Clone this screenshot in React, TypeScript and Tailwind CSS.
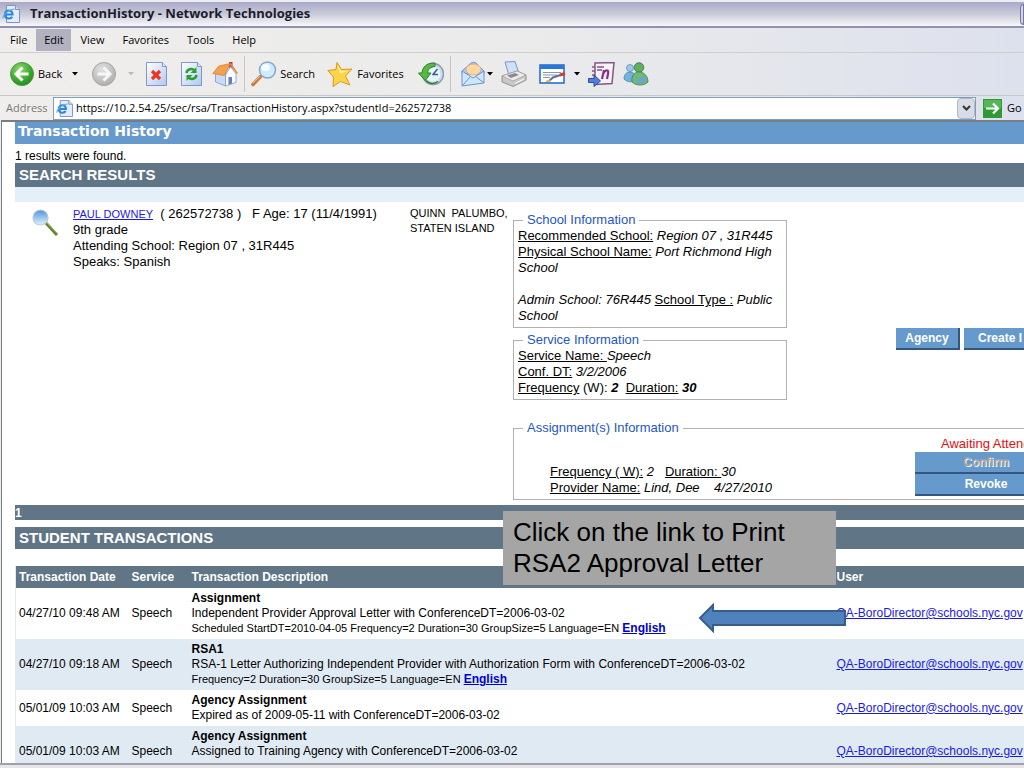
import type { ReactNode } from "react";

const menus = ["File", "Edit", "View", "Favorites", "Tools", "Help"];

const transactions = [
  {
    date: "04/27/10 09:48 AM",
    title: "Assignment",
    lines: ["Independent Provider Approval Letter with ConferenceDT=2006-03-02"],
    details: "Scheduled StartDT=2010-04-05 Frequency=2 Duration=30 GroupSize=5 Language=EN",
    letter: "English",
  },
  {
    date: "04/27/10 09:18 AM",
    title: "RSA1",
    lines: ["RSA-1 Letter Authorizing Independent Provider with Authorization Form with ConferenceDT=2006-03-02"],
    details: "Frequency=2 Duration=30 GroupSize=5 Language=EN",
    letter: "English",
  },
  {
    date: "05/01/09 10:03 AM",
    title: "Agency Assignment",
    lines: ["Expired as of 2009-05-11 with ConferenceDT=2006-03-02"],
  },
  {
    date: "05/01/09 10:03 AM",
    title: "Agency Assignment",
    lines: ["Assigned to Training Agency with ConferenceDT=2006-03-02", "\u00a0"],
  },
];

function PageIcon({ className }: { className: string }) {
  return (
    <svg viewBox="0 0 18 18" className={className} aria-hidden="true">
      <path d="M4.5.5h9l4 4v13h-13z" fill="#e3ecfb" stroke="#7f93bd" />
      <path d="M13.500.5v4h4" fill="#cfdcf4" stroke="#7f93bd" />
      <path
        d="M3 9.500h7.500c0-2.600-1.600-4-3.700-4S3 7.200 3 9.500s1.600 4 3.900 4c1.500 0 2.700-.7 3.300-1.800"
        fill="none"
        stroke="#2b86d9"
        strokeWidth="2.200"
      />
      <path d="M1 13.500C.3 10.500 7 4 12.500 4.200" fill="none" stroke="#5fb0ee" strokeWidth="1.200" />
    </svg>
  );
}

function BackIcon() {
  return (
    <svg viewBox="0 0 24 24" className="size-6" aria-hidden="true">
      <defs>
        <radialGradient id="back" cx=".4" cy=".3" r=".8">
          <stop offset="0" stopColor="#8fdc6c" />
          <stop offset=".6" stopColor="#3aa82f" />
          <stop offset="1" stopColor="#1d7f1c" />
        </radialGradient>
      </defs>
      <circle cx="12" cy="12" r="11.500" fill="url(#back)" stroke="#4b9a42" />
      <path d="M12.500 5.500 6 12l6.500 6.500M6.500 12H18.500" fill="none" stroke="#fff" strokeWidth="3" />
    </svg>
  );
}

function ForwardIcon() {
  return (
    <svg viewBox="0 0 24 24" className="size-6" aria-hidden="true">
      <defs>
        <radialGradient id="forward" cx=".4" cy=".3" r=".8">
          <stop offset="0" stopColor="#e2e2e2" />
          <stop offset="1" stopColor="#a9a9a9" />
        </radialGradient>
      </defs>
      <circle cx="12" cy="12" r="11.500" fill="url(#forward)" stroke="#a4a4a4" />
      <path d="M11.500 5.500 18 12l-6.500 6.500M17.500 12H5.500" fill="none" stroke="#f6f6f6" strokeWidth="3" />
    </svg>
  );
}

function SheetIcon({ children }: { children: ReactNode }) {
  return (
    <svg viewBox="0 0 21 24" className="h-6 w-[21px]" aria-hidden="true">
      <defs>
        <linearGradient id="sheet" x1="0" y1="0" x2="1" y2="1">
          <stop offset="0" stopColor="#ffffff" />
          <stop offset="1" stopColor="#b0c7f3" />
        </linearGradient>
      </defs>
      <path d="M.5.5h16l4 4v19H.5z" fill="url(#sheet)" stroke="#7f97cc" />
      <path d="M16.500.5v4h4" fill="#dde7fb" stroke="#7f97cc" />
      {children}
    </svg>
  );
}

function HomeIcon() {
  return (
    <svg viewBox="0 0 26 26" className="size-[26px]" aria-hidden="true">
      <path d="M17 1h3.500v7H17z" fill="#b3413a" />
      <path d="M3.500 12v9l10 4V12L9 7z" fill="#c9dbf6" stroke="#7f97c8" strokeWidth=".8" />
      <path d="m13.500 14 5-8.500L24 13v8.500L13.500 25z" fill="#fbfcff" stroke="#7f97c8" strokeWidth=".8" />
      <path d="M16.500 16h3.500v6.500l-3.500 1.200z" fill="#5f7fc0" />
      <path d="m.8 12.500 6-7.500 11.500-2.500-6 12z" fill="#f5a04a" stroke="#d98033" strokeWidth=".8" />
      <path d="m18.300 2.500 7 10" stroke="#e08a3c" strokeWidth="1.500" />
    </svg>
  );
}

function SearchIcon() {
  return (
    <svg viewBox="0 0 26 26" className="size-[26px]" aria-hidden="true">
      <path d="m9.500 15.500-7.500 8" stroke="#c77a3a" strokeWidth="3.500" strokeLinecap="round" />
      <path d="m9 15-7 7" stroke="#eab27c" strokeWidth="1.200" />
      <circle cx="16.500" cy="9" r="8" fill="#cfeafb" stroke="#8aa5cc" strokeWidth="1.500" />
      <ellipse cx="14.500" cy="6.500" rx="4.500" ry="3.500" fill="#f3fbff" />
    </svg>
  );
}

function StarIcon() {
  return (
    <svg viewBox="0 0 26 26" className="size-[26px]" aria-hidden="true">
      <path
        d="M10 1.500 14.500 8.500 25 8l-6.500 7 4.500 9-9.500-3.500L6 25.500l.5-9.500L.8 9.500 9 8.500z"
        fill="#fbd449"
        stroke="#d99a1c"
        strokeLinejoin="round"
      />
      <path d="m10.500 4.500 3.500 5.500 6.500.2-7.500 2.300z" fill="#fff1a8" />
    </svg>
  );
}

function HistoryIcon() {
  return (
    <svg viewBox="0 0 26 24" className="h-6 w-[26px]" aria-hidden="true">
      <circle cx="15" cy="12" r="10.500" fill="#c5dff0" stroke="#8e9bab" strokeWidth="1.500" />
      <circle cx="15" cy="12" r="7.500" fill="#e6f4fb" />
      <path d="m14.500 13 5-6M14.500 12.500h5.500" stroke="#3f5c85" strokeWidth="1.500" />
      <path
        d="M17 1C9 .5 4.500 5 4 11H.5l6.700 7.500L13 11H9.500c.5-4 3-6 7.500-6.500z"
        fill="#55b944"
        stroke="#27812a"
        strokeLinejoin="round"
      />
      <path d="M8 18.500c3 3.500 8 4 12 1" fill="none" stroke="#27812a" strokeWidth="1.500" />
    </svg>
  );
}

function MailIcon() {
  return (
    <svg viewBox="0 0 24 26" className="h-[26px] w-6" aria-hidden="true">
      <path d="M1 10 10 2q2.500-1.500 5 0l8 8v3H1z" fill="#a9cbf4" stroke="#6d94cf" />
      <ellipse cx="12.500" cy="8.500" rx="7.500" ry="5.500" fill="#fbd7a5" stroke="#d9a86a" strokeWidth=".8" />
      <path d="m1 10 11 7 11-7v12L1 25z" fill="#cfe5fc" stroke="#6d94cf" />
      <path d="m1.500 24.500 8-9M22.500 21.500l-8-6" stroke="#6d94cf" />
    </svg>
  );
}

function PrintIcon() {
  return (
    <svg viewBox="0 0 26 26" className="size-[26px]" aria-hidden="true">
      <path d="m4 1 10-.5 4 12-10 2z" fill="#cfe0fb" stroke="#7d93c4" />
      <path d="m1 15 15-5 9 4v5l-13 6.500L1 21z" fill="#c9c9c9" stroke="#929292" />
      <path d="m1 15 11 5 13-6-9-4z" fill="#ececec" stroke="#a0a0a0" strokeWidth=".8" />
      <path d="m6 14.500 8-2.500 4 2-8 3z" fill="#8a8a8a" />
      <path d="m14 22.500 9-4.500" stroke="#fff" />
    </svg>
  );
}

function EditIcon() {
  return (
    <svg viewBox="0 0 27 20" className="h-5 w-[27px]" aria-hidden="true">
      <path d="M1 1h24v18H1z" fill="#fff" stroke="#1f67c9" strokeWidth="1.500" />
      <path d="M1 1h24v4H1z" fill="#2877dd" />
      <path d="M4 8.500h18M4 11h14M4 13.500h7" stroke="#8d96a5" />
      <path d="m10 17 4-3.500 9-3" fill="none" stroke="#59709b" strokeWidth="2" />
      <path d="m21 11 5-1.500" stroke="#d33c2c" strokeWidth="3" />
      <path d="m7 17.500 5-1" stroke="#d8a83e" strokeWidth="1.500" />
    </svg>
  );
}

function NotesIcon() {
  return (
    <svg viewBox="0 0 27 25" className="h-[25px] w-[27px]" aria-hidden="true">
      <path d="m7 1 19-.5-2 21-17 1z" fill="#f7f2f9" stroke="#83587f" strokeWidth="1.500" />
      <path d="M7 5H4M7 9H4M7 13H4M9 5h7M9 8h5" stroke="#83587f" strokeWidth="1.500" />
      <path d="m14 17 2-9M15 12c3-5 6-5 5 0l-1 5" fill="none" stroke="#8c3080" strokeWidth="2.200" />
      <path d="M.5 16.500H6V13l6.500 6L6 24.500v-4H.5z" fill="#4f80db" stroke="#264f9e" />
    </svg>
  );
}

function MessengerIcon() {
  return (
    <svg viewBox="0 0 26 24" className="h-6 w-[26px]" aria-hidden="true">
      <circle cx="7" cy="6" r="3.500" fill="#9fc8e8" stroke="#5d8fb5" strokeWidth=".8" />
      <path d="M1 17c0-5 3-7 6-7s6 2 6 8c-4 3-9 2-12-1z" fill="#6fb3de" stroke="#4782ad" strokeWidth=".8" />
      <circle cx="16" cy="5.500" r="4.800" fill="#5fae62" stroke="#33783f" strokeWidth=".8" />
      <path d="M9 20c-1-7 3-10 7-10 5 0 9 4 9 10-4 4-12 4-16 0z" fill="#6fb978" stroke="#37804a" strokeWidth=".8" />
      <path d="M12 20c3-5 8-6 12-3-1 4-8 5-12 3z" fill="#6da4cf" />
    </svg>
  );
}

function LensIcon() {
  return (
    <svg viewBox="0 0 30 30" className="size-[30px]" aria-hidden="true">
      <defs>
        <linearGradient id="lens" x1="0" y1="0" x2="0" y2="1">
          <stop offset="0" stopColor="#4f94dc" />
          <stop offset="1" stopColor="#e0f3ff" />
        </linearGradient>
      </defs>
      <path d="m15 15 11 12" stroke="#5f7f2e" strokeWidth="3" />
      <path d="m15 14 11.500 12" stroke="#a5bd62" />
      <circle cx="9.500" cy="9.500" r="7.500" fill="url(#lens)" stroke="#bccbd9" strokeWidth="1.200" />
    </svg>
  );
}

function Caret({ className }: { className: string }) {
  return (
    <svg viewBox="0 0 6 4" className={`h-1 w-1.5 ${className}`} aria-hidden="true">
      <path d="M0 0h6L3 3.500z" fill="currentColor" />
    </svg>
  );
}

function Toolbar() {
  return (
    <div className="flex h-[43px] shrink-0 items-center border-b border-[#c9c8c8] pl-2.5 text-[11px]">
      <button className="flex items-center gap-1">
        <BackIcon />
        Back
      </button>
      <Caret className="ml-2.5" />
      <button aria-label="Forward" className="ml-3.5">
        <ForwardIcon />
      </button>
      <Caret className="ml-3 text-[#bbb]" />
      <button aria-label="Stop" className="ml-3">
        <SheetIcon>
          <path d="m6 9 8 8m0-8-8 8" stroke="#e8391f" strokeWidth="3.200" />
        </SheetIcon>
      </button>
      <button aria-label="Refresh" className="ml-3.5">
        <SheetIcon>
          <path d="M5.500 11c.5-4 5.500-5 8-2.500M15.500 13c-.5 4-5.500 5-8 2.500" fill="none" stroke="#2ba02f" strokeWidth="2.500" />
          <path d="M15.500 5v6h-6zM5.500 19v-6h6z" fill="#2ba02f" />
        </SheetIcon>
      </button>
      <button aria-label="Home" className="ml-2.5">
        <HomeIcon />
      </button>
      <span className="mr-1.5 ml-1.5 h-9 w-px bg-[#c6c6c6]" />
      <button className="flex items-center gap-[3px]">
        <SearchIcon />
        Search
      </button>
      <button className="ml-3 flex items-center gap-1">
        <StarIcon />
        Favorites
      </button>
      <button aria-label="History" className="ml-3.5">
        <HistoryIcon />
      </button>
      <span className="mr-2.5 ml-1.5 h-9 w-px bg-[#c6c6c6]" />
      <button aria-label="Mail">
        <MailIcon />
      </button>
      <Caret className="ml-0.5" />
      <button aria-label="Print" className="ml-2">
        <PrintIcon />
      </button>
      <button aria-label="Edit page" className="ml-3">
        <EditIcon />
      </button>
      <Caret className="ml-2" />
      <button aria-label="Notes" className="ml-2">
        <NotesIcon />
      </button>
      <button aria-label="Messenger" className="ml-2">
        <MessengerIcon />
      </button>
    </div>
  );
}

function AddressBar() {
  return (
    <div className="flex h-6 shrink-0 items-center pl-1.5 text-[11px]">
      <label htmlFor="address" className="w-[47px] text-[#777]">
        Address
      </label>
      <div className="flex h-[23px] flex-1 items-center border border-[#7f9db9] bg-white pl-0.5">
        <PageIcon className="size-[17px]" />
        <input
          id="address"
          className="ml-[3px] flex-1 bg-transparent outline-none"
          defaultValue="https://10.2.54.25/sec/rsa/TransactionHistory.aspx?studentId=262572738"
        />
        <button
          aria-label="Show addresses"
          className="flex h-[21px] w-[18px] items-center justify-center rounded-sm border border-[#b4b7c6] bg-[#d9dbe6]"
        >
          <svg viewBox="0 0 9 6" className="h-1.5 w-[9px]" aria-hidden="true">
            <path d="m1 1 3.500 3.500L8 1" fill="none" stroke="#333" strokeWidth="2" />
          </svg>
        </button>
      </div>
      <button className="ml-[7px] flex w-[41px] items-center gap-[5px]">
        <svg viewBox="0 0 19 19" className="size-[19px]" aria-hidden="true">
          <path d="M0 0h19v19H0z" fill="#2f9a35" />
          <path d="M1 1h17v8H1z" fill="#56b555" />
          <path d="M3 9.500h12M10 4.500l5 5-5 5" fill="none" stroke="#fff" strokeWidth="2.200" />
        </svg>
        Go
      </button>
    </div>
  );
}

function Group({ title, className, children }: { title: string; className: string; children: ReactNode }) {
  return (
    <fieldset className={`border border-[#b0b0b0] px-1 ${className}`}>
      <legend className="ml-[5px] px-1 text-[#1f55c4]">{title}</legend>
      {children}
    </fieldset>
  );
}

function ActionButton({ className, children }: { className: string; children: ReactNode }) {
  return (
    <button
      className={`h-[22px] border-r-2 border-b-2 border-[#34567c] bg-[#6699cc] text-[12px] leading-5 font-bold whitespace-nowrap ${className}`}
    >
      {children}
    </button>
  );
}

function SearchResult() {
  return (
    <div className="flex pt-1 pl-4 text-[13px] leading-4">
      <div className="w-[42px] shrink-0 pt-0.5">
        <LensIcon />
      </div>
      <div className="w-[337px] shrink-0 whitespace-pre">
        <p>
          <a href="#student" className="text-[11px] text-[#1a1ae0] underline">
            PAUL DOWNEY
          </a>
          {"  ( 262572738 )   F Age: 17 (11/4/1991)"}
        </p>
        <p>9th grade</p>
        <p>Attending School: Region 07 , 31R445</p>
        <p>Speaks: Spanish</p>
      </div>
      <div className="w-[103px] shrink-0 text-[11px] leading-[15px] whitespace-pre">
        <p>QUINN  PALUMBO,</p>
        <p>STATEN ISLAND</p>
      </div>
      <div className="flex-1 pt-1.5">
        <div className="flex">
          <div className="flex w-[274px] flex-col gap-1">
            <Group title="School Information" className="pb-[3px]">
              <p>
                <u>Recommended School:</u> <i>Region 07 , 31R445</i>
              </p>
              <p>
                <u>Physical School Name:</u> <i>Port Richmond High School</i>
              </p>
              <p className="mt-4">
                <i>Admin School: 76R445</i> <u>School Type :</u> <i>Public School</i>
              </p>
            </Group>
            <Group title="Service Information" className="pb-[3px]">
              <p>
                <u>Service Name: </u>
                <i>Speech</i>
              </p>
              <p>
                <u>Conf. DT:</u> <i>3/2/2006</i>
              </p>
              <p className="whitespace-pre">
                <u>Frequency</u> (W): <b className="italic">2</b>
                {"  "}
                <u>Duration:</u> <b className="italic">30</b>
              </p>
            </Group>
          </div>
          <div className="ml-[109px] flex items-start gap-1 pt-[116px] text-white">
            <ActionButton className="w-16">Agency</ActionButton>
            <ActionButton className="w-28 pl-3.5 text-left">Create I</ActionButton>
          </div>
        </div>
        <Group title="Assignment(s) Information" className="mt-5 pb-[3px]">
          <div className="flex items-end">
            <div className="w-[397px] pl-8 whitespace-pre">
              <p>
                <u>Frequency ( W):</u> <i>2</i>
                {"   "}
                <u>Duration: </u>
                <i>30</i>
              </p>
              <p>
                <u>Provider Name:</u> <i>Lind, Dee    4/27/2010</i>
              </p>
            </div>
            <div className="flex w-36 flex-col">
              <p className="pl-[26px] whitespace-nowrap text-[#e01010]">Awaiting Attend</p>
              <ActionButton className="text-[#a3a3a3] [text-shadow:1px_1px_0_#f4f4f4]">Confirm</ActionButton>
              <ActionButton className="text-white">Revoke</ActionButton>
            </div>
          </div>
        </Group>
      </div>
    </div>
  );
}

function TransactionTable() {
  return (
    <table className="mt-[17px] w-full table-fixed border-l border-[#dfe9f2] text-left text-[12px] leading-[15px]">
      <colgroup>
        <col className="w-[113px]" />
        <col className="w-[60px]" />
        <col className="w-[645px]" />
        <col />
      </colgroup>
      <thead className="bg-[#607585] text-white">
        <tr className="h-[22px]">
          <th className="pl-[3px]">Transaction Date</th>
          <th className="pl-[3px]">Service</th>
          <th className="pl-[3px]">Transaction Description</th>
          <th className="pl-[3px]">User</th>
        </tr>
      </thead>
      <tbody>
        {transactions.map((t, i) => (
          <tr key={i} className="even:bg-[#e0eaf3]">
            <td className="py-[3px] pl-[3px]">{t.date}</td>
            <td className="py-[3px] pl-[3px]">Speech</td>
            <td className="py-[3px] pl-[3px] whitespace-nowrap">
              <p className="font-bold">{t.title}</p>
              {t.lines.map((line) => (
                <p key={line}>{line}</p>
              ))}
              {t.letter && (
                <p className="text-[11px]">
                  {t.details}{" "}
                  <a href="#letter" className="text-[12px] leading-3 font-bold text-[#0000cc] underline">
                    {t.letter}
                  </a>
                </p>
              )}
            </td>
            <td className="py-[3px] pl-[3px]">
              <a href="mailto:QA-BoroDirector@schools.nyc.gov" className="text-[#1a1ae0] underline">
                QA-BoroDirector@schools.nyc.gov
              </a>
            </td>
          </tr>
        ))}
      </tbody>
    </table>
  );
}

export default function App() {
  return (
    <div className="flex h-screen flex-col overflow-hidden bg-gradient-to-r from-[#efeeec] via-[#ebebeb] to-[#dde1ed] font-['Open_Sans','Noto_Sans',sans-serif] text-black">
      <header className="flex h-7 shrink-0 items-center justify-between border-t-2 border-b-2 border-t-[#ededf4] border-b-[#9192ae] bg-gradient-to-b from-[#aaa8c8] via-[#c9cad8] to-[#f8f8fb]">
        <div className="flex items-center gap-2.5 pl-0.5">
          <PageIcon className="size-[18px]" />
          <h1 className="text-[13px] font-bold text-[#1c1c2c]">TransactionHistory - Network Technologies</h1>
        </div>
        <button aria-label="Minimize" className="h-[21px] w-1 rounded-l border border-[#77779c] bg-[#d5d5e6]" />
      </header>
      <nav className="flex h-[25px] shrink-0 items-center border-b border-[#cfcecb] pl-px text-[11px]">
        {menus.map((m) => (
          <button key={m} className={`h-[22px] ${m === "Edit" ? "w-[35px] bg-[#b1b1c0]" : "px-[9px]"}`}>
            {m}
          </button>
        ))}
      </nav>
      <Toolbar />
      <AddressBar />
      <main className="relative ml-px flex-1 overflow-hidden border-t-2 border-l border-[#777d84] bg-white pl-[13px] font-['Liberation_Sans',Arial,sans-serif]">
        <div className="min-w-[1060px]">
          <h2 className="h-[22px] bg-[#6699cc] pl-[3px] font-['DejaVu_Sans',sans-serif] text-[14px] leading-[18px] font-bold text-white">
            Transaction History
          </h2>
          <p className="h-[19px] text-[12px] leading-6">1 results were found.</p>
          <h3 className="h-6 bg-[#607585] pl-1 text-[15px] leading-6 font-bold text-white">SEARCH RESULTS</h3>
          <div className="h-[15px] bg-[#e3eff9]" />
          <SearchResult />
          <div className="mt-[5px] h-[15px] bg-[#607585] text-[12px] leading-4 font-bold text-white">1</div>
          <h3 className="mt-[7px] h-[22px] bg-[#607585] pl-1 text-[15px] leading-[22px] font-bold text-white">
            STUDENT TRANSACTIONS
          </h3>
          <TransactionTable />
        </div>
        <p className="absolute top-[389px] left-[501px] w-[333px] bg-[#a5a5a5] px-2.5 py-[6px] text-[26px] leading-[31px]">
          Click on the link to Print RSA2 Approval Letter
        </p>
        <svg viewBox="0 0 150 30" className="absolute top-[481px] left-[696px] h-[30px] w-[150px]" aria-hidden="true">
          <path d="M2 15 15 2v6h132v14H15v6z" fill="#4f81bd" stroke="#385d8a" strokeWidth="2" />
        </svg>
      </main>
      <footer className="h-[5px] shrink-0 border-t-2 border-[#a0a0a6] bg-[#e6e6ea]" />
    </div>
  );
}
